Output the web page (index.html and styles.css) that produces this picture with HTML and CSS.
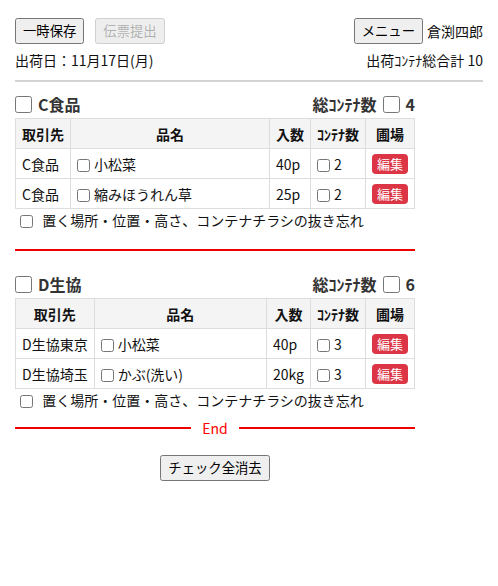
FILE: index.html
```html
<!DOCTYPE html>
<html lang="ja">
<head>
  <meta charset="UTF-8" />
  <meta name="viewport" content="width=device-width, initial-scale=1.0" />
  <title>出荷チェック</title>
  <link rel="stylesheet" href="styles.css">
</head>
<body>

  <!-- 上部ボタン -->
  <div class="topbar">
    <div class="topbar-left">
      <button class="btn">一時保存</button>
      <button class="btn" disabled>伝票提出</button>
    </div>
    <div class="topbar-right">
      <button class="btn">メニュー</button>
      <span class="user">倉渕四郎</span>
    </div>
  </div>

  <div class="info">
    <span>出荷日：11月17日(月)</span>
    <span>出荷ｺﾝﾃﾅ総合計 10</span>
  </div>

  <hr class="divider">

  <div class="content">

    <!-- C食品 -->
    <div class="shipper">
      <div class="shipper-head">
        <label class="shipper-name"><input type="checkbox" class="big-check"> C食品</label>
        <div class="shipper-total">総ｺﾝﾃﾅ数 <input type="checkbox" class="big-check"> 4</div>
      </div>
      <table class="items">
        <tr>
          <th class="fit">取引先</th>
          <th>品名</th>
          <th class="fit">入数</th>
          <th class="fit">ｺﾝﾃﾅ数</th>
          <th class="fit">圃場</th>
        </tr>
        <tr>
          <td class="fit">C食品</td>
          <td><input type="checkbox" class="sm-check">小松菜</td>
          <td class="fit">40p</td>
          <td class="fit"><input type="checkbox" class="sm-check">2</td>
          <td class="fit"><button class="edit">編集</button></td>
        </tr>
        <tr>
          <td class="fit">C食品</td>
          <td><input type="checkbox" class="sm-check">縮みほうれん草</td>
          <td class="fit">25p</td>
          <td class="fit"><input type="checkbox" class="sm-check">2</td>
          <td class="fit"><button class="edit">編集</button></td>
        </tr>
      </table>
      <label class="note"><input type="checkbox" class="sm-check"> 置く場所・位置・高さ、コンテナチラシの抜き忘れ</label>
    </div>

    <hr class="red-line">

    <!-- D生協 -->
    <div class="shipper">
      <div class="shipper-head">
        <label class="shipper-name"><input type="checkbox" class="big-check"> D生協</label>
        <div class="shipper-total">総ｺﾝﾃﾅ数 <input type="checkbox" class="big-check"> 6</div>
      </div>
      <table class="items">
        <tr>
          <th class="fit">取引先</th>
          <th>品名</th>
          <th class="fit">入数</th>
          <th class="fit">ｺﾝﾃﾅ数</th>
          <th class="fit">圃場</th>
        </tr>
        <tr>
          <td class="fit">D生協東京</td>
          <td><input type="checkbox" class="sm-check">小松菜</td>
          <td class="fit">40p</td>
          <td class="fit"><input type="checkbox" class="sm-check">3</td>
          <td class="fit"><button class="edit">編集</button></td>
        </tr>
        <tr>
          <td class="fit">D生協埼玉</td>
          <td><input type="checkbox" class="sm-check">かぶ(洗い)</td>
          <td class="fit">20kg</td>
          <td class="fit"><input type="checkbox" class="sm-check">3</td>
          <td class="fit"><button class="edit">編集</button></td>
        </tr>
      </table>
      <label class="note"><input type="checkbox" class="sm-check"> 置く場所・位置・高さ、コンテナチラシの抜き忘れ</label>
    </div>

    <div class="end-line">End</div>

    <div class="clear-row">
      <button class="btn">チェック全消去</button>
    </div>
  </div>

</body>
</html>
```

FILE: styles.css
```css
body {
  margin: 0;
  padding: 18px 15px 20px;
  font-family: "Noto Sans CJK JP", "Noto Sans", sans-serif;
  font-size: 14px;
  color: #111;
}

.btn {
  font-family: inherit;
  font-size: 13.33px;
  line-height: 20px;
  padding: 1px 6px;
  margin: 0;
}

/* 上部 */
.topbar {
  display: flex;
  justify-content: space-between;
  align-items: center;
}

.topbar-left {
  display: flex;
  gap: 11px;
}

.topbar-right {
  display: flex;
  align-items: center;
  gap: 4px;
}

.info {
  display: flex;
  justify-content: space-between;
  margin-top: 6px;
  line-height: 20px;
}

.divider {
  border: 0;
  border-top: 2px solid #d3d3d3;
  margin: 10px 0 0;
}

.content {
  width: 400px;
}

/* 出荷先 */
.shipper {
  padding-top: 10px;
}

.shipper-head {
  display: flex;
  justify-content: space-between;
  align-items: center;
  font-weight: bold;
  font-size: 16px;
  color: #333;
  height: 24px;
}

.shipper-name,
.shipper-total {
  display: flex;
  align-items: center;
}

.big-check {
  width: 17px;
  height: 17px;
  margin: 0 6px 0 0;
}

.shipper-total .big-check {
  margin: 0 6px 0 6px;
}

.items {
  width: 100%;
  border-collapse: collapse;
  margin-top: 2px;
}

.items th,
.items td {
  border: 1px solid #ddd;
  padding: 0 6px;
  height: 29px;
  text-align: left;
}

.items th {
  background: #f4f4f4;
  text-align: center;
  font-weight: bold;
}

.items .fit {
  width: 1%;
  white-space: nowrap;
}

.sm-check {
  width: 13px;
  height: 13px;
  margin: 0 4px 0 0;
  vertical-align: -2px;
}

.edit {
  font-family: inherit;
  font-size: 13px;
  line-height: 20px;
  padding: 0 5px;
  background: #dc3545;
  color: #fff;
  border: 0;
  border-radius: 4px;
}

.note {
  display: block;
  margin-top: 1px;
  padding-left: 5px;
  line-height: 20px;
}

.note .sm-check {
  margin-right: 6px;
}

.red-line {
  border: 0;
  border-top: 2px solid #e00;
  margin: 19px 0 11px;
}

.end-line {
  display: flex;
  align-items: center;
  gap: 11px;
  color: #f00;
  margin-top: 8px;
  line-height: 20px;
}

.end-line::before,
.end-line::after {
  content: '';
  flex: 1;
  border-top: 2px solid #e00;
}

.clear-row {
  text-align: center;
  margin-top: 17px;
}
```
